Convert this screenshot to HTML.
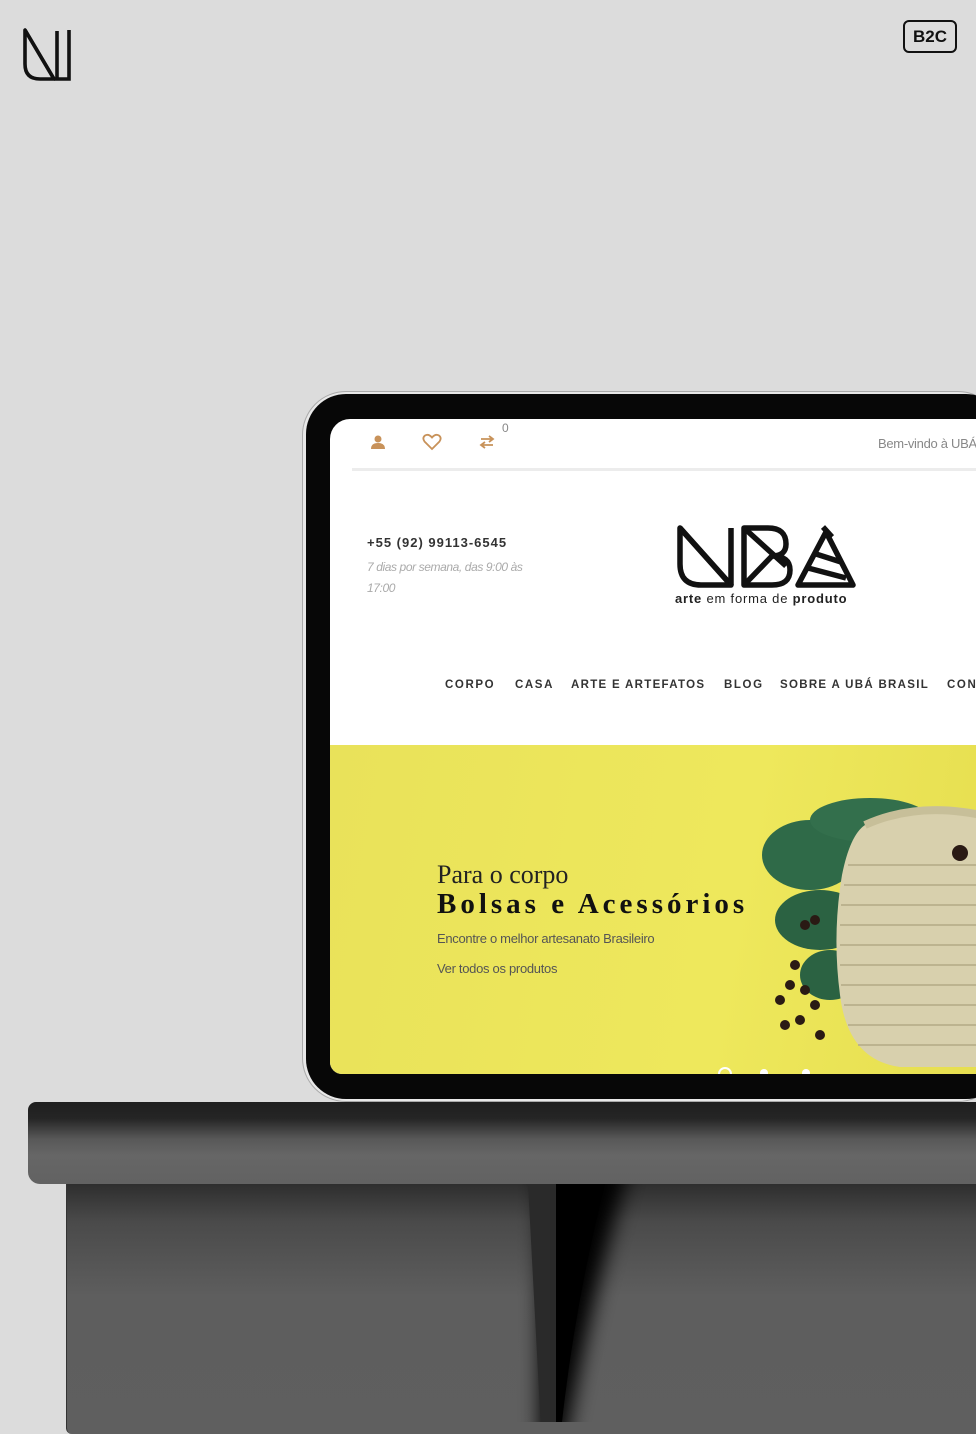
<!DOCTYPE html>
<html><head><meta charset="utf-8"><style>
*{margin:0;padding:0;box-sizing:border-box}
body{width:976px;height:1422px;overflow:hidden;background:#dcdcdc;position:relative;font-family:"Liberation Sans",sans-serif}
.abs{position:absolute}
.nav{position:absolute;top:260px;font:bold 11.5px 'Liberation Sans',sans-serif;color:#333;letter-spacing:1.6px;white-space:nowrap}
</style></head><body>
<svg class="abs" style="left:20px;top:26px" width="56" height="58" viewBox="0 0 56 58">
<path d="M5 4 V38 Q5 53 20 53 H34 Z" fill="none" stroke="#111" stroke-width="3.6" stroke-linejoin="round"/>
<path d="M5 4 L34 53" stroke="#111" stroke-width="3.6"/>
<path d="M37 5 V53" stroke="#111" stroke-width="3.6"/>
<path d="M49 4 V53 H34" fill="none" stroke="#111" stroke-width="3.6"/>
</svg>
<div class="abs" style="left:903px;top:20px;width:54px;height:33px;border:2px solid #111;border-radius:6px;font:bold 17px 'Liberation Sans',sans-serif;color:#111;text-align:center;line-height:29px">B2C</div>

<div class="abs" style="left:302px;top:391px;width:700px;height:711px;border-radius:44px;background:#e8e8e8;border:1px solid #aaa"></div>
<div class="abs" style="left:306px;top:394px;width:700px;height:705px;border-radius:40px;background:#070707"></div>
<div class="abs" style="left:330px;top:419px;width:660px;height:655px;border-radius:20px 0 0 12px;background:#fff;overflow:hidden">
  <svg class="abs" style="left:40px;top:15px" width="16" height="16" viewBox="0 0 16 16"><circle cx="8" cy="5" r="3.5" fill="#c8925a"/><path d="M1 15 Q1 9 8 9 Q15 9 15 15Z" fill="#c8925a"/></svg>
  <svg class="abs" style="left:92px;top:14px" width="20" height="18" viewBox="0 0 20 18"><path d="M10 16 L2.5 8.5 Q0 5 3 2.5 Q6.5 0.5 10 4.5 Q13.5 0.5 17 2.5 Q20 5 17.5 8.5Z" fill="none" stroke="#c8925a" stroke-width="1.8"/></svg>
  <svg class="abs" style="left:148px;top:16px" width="18" height="14" viewBox="0 0 18 14"><path d="M3 4 H14 M11 1 L15 4 L11 7" stroke="#c8925a" stroke-width="1.8" fill="none"/><path d="M15 10 H4 M7 7 L3 10 L7 13" stroke="#c8925a" stroke-width="1.8" fill="none"/></svg>
  <div class="abs" style="left:172px;top:2px;font-size:12px;color:#888">0</div>
  <div class="abs" style="left:548px;top:17px;font-size:13px;color:#888;white-space:nowrap;letter-spacing:-0.3px">Bem-vindo à UBÁ</div>
  <div class="abs" style="left:22px;top:49px;width:640px;height:3px;background:#ececec"></div>
  <div class="abs" style="left:37px;top:116px;font:bold 13px 'Liberation Sans',sans-serif;color:#333;letter-spacing:1px">+55 (92) 99113-6545</div>
  <div class="abs" style="left:37px;top:138px;font:italic 12px/21px 'Liberation Sans',sans-serif;color:#aaa;width:180px;letter-spacing:-0.4px">7 dias por semana, das 9:00 às 17:00</div>
  <svg class="abs" style="left:346px;top:105px" width="182" height="66" viewBox="0 0 182 66">
   <g fill="none" stroke="#111" stroke-width="5.5" stroke-linejoin="round">
    <path d="M4 4 V40 Q4 61 25 61 H55 Z"/><path d="M4 4 L55 61"/><path d="M55 4 V61"/>
    <path d="M68 61 V4 H92 Q110 4 110 20 Q110 32 96 32 Q114 32 114 46 Q114 61 96 61 Z"/><path d="M68 4 L110 42"/><path d="M68 61 L96 32"/>
    <path d="M122 61 L150 8 L177 61 Z"/><path d="M132 44 L170 54"/><path d="M140 30 L165 38"/><path d="M147 3 L156 13"/>
   </g></svg>
  <div class="abs" style="left:345px;top:172px;font-size:13px;color:#222;letter-spacing:0.8px;white-space:nowrap"><b>arte</b> em forma de <b>produto</b></div>
  <div class="nav" style="left:115px">CORPO</div>
  <div class="nav" style="left:185px">CASA</div>
  <div class="nav" style="left:241px;letter-spacing:1.3px">ARTE E ARTEFATOS</div>
  <div class="nav" style="left:394px">BLOG</div>
  <div class="nav" style="left:450px;letter-spacing:1.3px">SOBRE A UBÁ BRASIL</div>
  <div class="nav" style="left:617px">CONTATO</div>
  <div class="abs" style="left:0;top:326px;width:660px;height:330px;background:linear-gradient(100deg,#e9e25a,#eee85c 60%,#e6de4f)">
    <svg class="abs" style="left:430px;top:50px" width="230" height="280" viewBox="0 0 230 280">
      <ellipse cx="50" cy="60" rx="48" ry="35" fill="#2f6a48"/>
      <ellipse cx="60" cy="125" rx="45" ry="30" fill="#2b6242"/>
      <ellipse cx="110" cy="25" rx="60" ry="22" fill="#336f4c"/>
      <ellipse cx="70" cy="180" rx="30" ry="25" fill="#2b6242"/>
      <path d="M105 30 Q90 40 82 80 Q72 140 80 200 Q88 265 140 272 H230 V20 Q160 10 105 30Z" fill="#d8d0ad"/>
      <path d="M105 30 Q160 5 230 22" stroke="#c7bf99" stroke-width="8" fill="none"/>
      <g stroke="#b6ad88" stroke-width="2" fill="none" opacity=".8">
      <path d="M88 70 H230"/><path d="M84 90 H230"/><path d="M81 110 H230"/><path d="M80 130 H230"/><path d="M80 150 H230"/><path d="M80 170 H230"/><path d="M81 190 H230"/><path d="M84 210 H230"/><path d="M88 230 H230"/><path d="M98 250 H230"/></g>
      <circle cx="200" cy="58" r="8" fill="#2a1a14"/>
      <g fill="#2a1a14"><circle cx="45" cy="130" r="5"/><circle cx="55" cy="125" r="5"/><circle cx="35" cy="170" r="5"/><circle cx="30" cy="190" r="5"/><circle cx="45" cy="195" r="5"/><circle cx="20" cy="205" r="5"/><circle cx="55" cy="210" r="5"/><circle cx="40" cy="225" r="5"/><circle cx="25" cy="230" r="5"/><circle cx="60" cy="240" r="5"/></g>
    </svg>
    <div class="abs" style="left:107px;top:115px;font:26px 'Liberation Serif',serif;color:#222">Para o corpo</div>
    <div class="abs" style="left:107px;top:143px;font:bold 29px 'Liberation Serif',serif;color:#111;letter-spacing:4px;white-space:nowrap">Bolsas e Acessórios</div>
    <div class="abs" style="left:107px;top:186px;font:13px 'Liberation Sans',sans-serif;color:#555;letter-spacing:-0.3px">Encontre o melhor artesanato Brasileiro</div>
    <div class="abs" style="left:107px;top:216px;font:13px 'Liberation Sans',sans-serif;color:#555;letter-spacing:-0.3px">Ver todos os produtos</div>
    <div class="abs" style="left:388px;top:322px;width:14px;height:14px;border-radius:50%;border:2px solid #fff"></div>
    <div class="abs" style="left:430px;top:324px;width:8px;height:8px;border-radius:50%;background:#fff"></div>
    <div class="abs" style="left:472px;top:324px;width:8px;height:8px;border-radius:50%;background:#fff"></div>
  </div>
</div>

<div class="abs" style="left:66px;top:1184px;width:920px;height:250px;overflow:hidden;border-radius:0 0 0 6px;background:linear-gradient(180deg,#2e2e2e 0%,#4a4a4a 15%,#5e5e5e 45%,#5f5f5f 100%);border-left:1px solid #333"></div>
<svg class="abs" style="left:480px;top:1184px" width="200" height="238" viewBox="0 0 200 238">
  <defs><filter id="b" x="-50%" y="-10%" width="200%" height="120%"><feGaussianBlur stdDeviation="10"/></filter></defs>
  <path d="M60 -20 L150 -20 Q110 120 85 260 L60 260Z" fill="#000" filter="url(#b)"/>
  <path d="M70 0 L125 0 Q95 120 82 238 L70 238Z" fill="#000"/>
</svg>
<div class="abs" style="left:528px;top:1184px;width:28px;height:238px;background:#2a2a2a;clip-path:polygon(0 0,100% 0,100% 100%,45% 100%)"></div>
<div class="abs" style="left:28px;top:1102px;width:960px;height:82px;border-radius:8px 0 0 12px;background:linear-gradient(180deg,#1f1f1f 0%,#252525 20%,#585858 45%,#666 65%,#626262 100%)"></div>
</body></html>
